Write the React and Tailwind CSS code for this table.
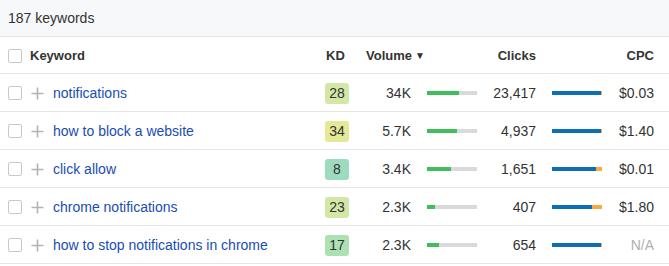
const ROWS = [
  { kw: "notifications", kd: 28, kdBg: "bg-[#d3e8a7]", vol: "34K", volPct: 64, clicks: "23,417", clickPct: 98, cpc: "$0.03" },
  { kw: "how to block a website", kd: 34, kdBg: "bg-[#e4e897]", vol: "5.7K", volPct: 60, clicks: "4,937", clickPct: 98, cpc: "$1.40" },
  { kw: "click allow", kd: 8, kdBg: "bg-[#9ddbbf]", vol: "3.4K", volPct: 48, clicks: "1,651", clickPct: 88, cpc: "$0.01" },
  { kw: "chrome notifications", kd: 23, kdBg: "bg-[#d3e8a7]", vol: "2.3K", volPct: 16, clicks: "407", clickPct: 80, cpc: "$1.80" },
  { kw: "how to stop notifications in chrome", kd: 17, kdBg: "bg-[#ade0b3]", vol: "2.3K", volPct: 24, clicks: "654", clickPct: 98, cpc: "N/A" },
];

function Checkbox() {
  return <span className="block w-[14px] h-[14px] shrink-0 border border-[#c8c8c8] rounded-[2px] bg-white" />;
}

function PlusIcon() {
  return (
    <svg width="13" height="13" viewBox="0 0 13 13" className="ml-[9px] shrink-0">
      <path d="M6.5 0.5v12M0.5 6.5h12" stroke="#b3b3b3" strokeWidth="1.6" fill="none" />
    </svg>
  );
}

export default function App() {
  return (
    <div className="w-[669px] h-[266px] bg-white text-[14px] text-[#333] overflow-hidden" style={{ fontFamily: "'Liberation Sans', Arial, sans-serif" }}>
      {/* Summary bar */}
      <div className="h-[37px] flex items-center px-2 bg-[#f7f8fa] border-b border-[#e6e6e6]">
        187 keywords
      </div>

      {/* Header */}
      <div className="h-[37px] flex items-center pl-2 pr-[15px] pt-[2px] border-b border-[#e6e6e6] font-bold text-[13px]">
        <Checkbox />
        <span className="ml-[8px] flex-1">Keyword</span>
        <span className="w-[24px] pl-px">KD</span>
        <span className="w-[128px] pl-[17px] flex items-center gap-[3px]">
          Volume
          <span className="text-[10px] leading-none">▼</span>
        </span>
        <span className="w-[59px] text-right">Clicks</span>
        <span className="w-[50px] ml-4" />
        <span className="w-[52px] text-right">CPC</span>
      </div>

      {/* Rows */}
      {ROWS.map(r => (
        <div key={r.kw} className="h-[38px] flex items-center pl-2 pr-[15px] pt-px border-b border-[#e6e6e6]">
          <Checkbox />
          <PlusIcon />
          <span className="ml-[9px] flex-1 text-[#1a4cb3] truncate">{r.kw}</span>
          <span className={`w-[24px] h-[21px] rounded-[3px] flex items-center justify-center text-[#333] ${r.kdBg}`}>{r.kd}</span>
          <span className="w-[62px] text-right">{r.vol}</span>
          <span className="w-[50px] h-[4px] ml-4 bg-[#dadada] flex">
            <span className="h-full bg-[#3fbf5b]" style={{ width: `${r.volPct}%` }} />
          </span>
          <span className="w-[59px] text-right">{r.clicks}</span>
          <span className="w-[50px] h-[4px] ml-4 bg-[#f7a83e] flex">
            <span className="h-full bg-[#0d6eb8]" style={{ width: `${r.clickPct}%` }} />
          </span>
          <span className={`w-[52px] text-right ${r.cpc === "N/A" ? "text-[#b0b0b0]" : ""}`}>{r.cpc}</span>
        </div>
      ))}
    </div>
  );
}
